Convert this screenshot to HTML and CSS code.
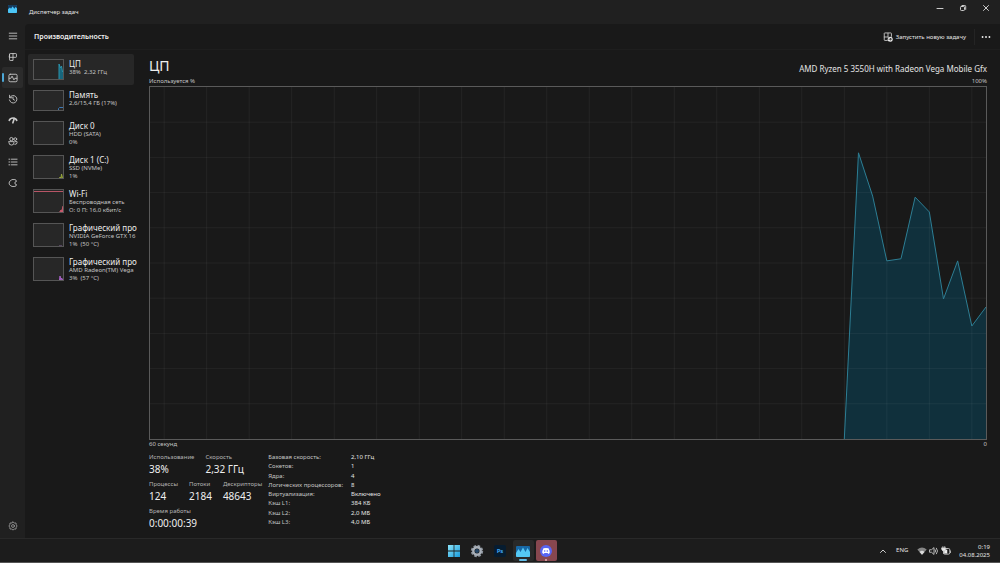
FILE: index.html
```html
<!DOCTYPE html>
<html lang="ru">
<head>
<meta charset="utf-8">
<meta name="viewport" content="width=device-width, initial-scale=1">
<title>Диспетчер задач</title>
<link rel="stylesheet" href="styles.css">
</head>
<body>
<div class="window">
  <header class="titlebar">
    <svg class="app-icon" viewBox="0 0 18 16"><rect width="18" height="16" rx="2" fill="#1673b8"/><path d="M0 2Q0 0 2 0H16Q18 0 18 2V6L15 4 13 7 9 3 6 7 4 5 0 8Z" fill="#173b5c"/><path d="M0 9 4 5 6 8 9 3 13 8 15 4 18 7V14Q18 16 16 16H2Q0 16 0 14Z" fill="#4cc5f5"/></svg>
    <span class="app-name">Диспетчер задач</span>
    <div class="controls">
      <button class="control" aria-label="Свернуть"><svg class="icon-s" viewBox="0 0 8 8"><path d="M1 4.500H7"/></svg></button>
      <button class="control" aria-label="Восстановить"><svg class="icon-s" viewBox="0 0 8 8"><rect x="1.500" y="2.500" width="4" height="4" rx=".8"/><path d="M3 1.500H5.800Q6.700 1.500 6.700 2.400V5.400"/></svg></button>
      <button class="control" aria-label="Закрыть"><svg class="icon-s" viewBox="0 0 8 8"><path d="M1.500 1.500 6.500 6.500M6.500 1.500 1.500 6.500"/></svg></button>
    </div>
  </header>
  <div class="body">
    <nav class="rail">
      <button class="rail-btn" aria-label="Меню"><svg class="icon" viewBox="0 0 16 16"><path d="M2 3.500H14M2 8H14M2 12.500H14"/></svg></button>
      <button class="rail-btn" aria-label="Процессы"><svg class="icon" viewBox="0 0 16 16"><path d="M2.500 3.500Q2.500 2.500 3.500 2.500H12.500Q13.500 2.500 13.500 3.500V7.500Q13.500 8.500 12.500 8.500H2.500ZM8 2.500V13.500H3.500Q2.500 13.500 2.500 12.500V3.500"/></svg></button>
      <button class="rail-btn current" aria-label="Производительность" aria-current="page"><svg class="icon" viewBox="0 0 16 16"><rect x="1.500" y="2" width="13" height="12" rx="2"/><path d="M2 8.500H4.500L6.500 5 9.500 11 11 8.500H14"/></svg></button>
      <button class="rail-btn" aria-label="Журнал приложений"><svg class="icon" viewBox="0 0 16 16"><path d="M2.500 2V6H6.500M2.800 5.800A6 6 0 1 1 2.300 9.500M8 5V8.500L10.500 9.800"/></svg></button>
      <button class="rail-btn" aria-label="Автозагрузка"><svg class="icon" viewBox="0 0 16 16"><path d="M2 8.500A6.500 6 0 0 1 14 8.500" stroke-width="2.600"/><path d="M10 5.500 7.800 12.500" stroke-width="2.600"/></svg></button>
      <button class="rail-btn" aria-label="Пользователи"><svg class="icon" viewBox="0 0 16 16"><circle cx="5.500" cy="5" r="2.700"/><circle cx="11.700" cy="5" r="2.200"/><path d="M1.500 9H9.500V11Q9.500 14.500 5.500 14.500T1.500 11ZM11 9H14.500V10.500Q14.500 13.500 11 13.500"/></svg></button>
      <button class="rail-btn" aria-label="Подробности"><svg class="icon" viewBox="0 0 16 16"><path d="M1.500 3.500H3M5.500 3.500H14.500M1.500 8H3M5.500 8H14.500M1.500 12.500H3M5.500 12.500H14.500"/></svg></button>
      <button class="rail-btn" aria-label="Службы"><svg class="icon" viewBox="0 0 16 16"><path d="M7 2.500H11Q13.500 3 13.500 5.500A2.500 2.500 0 0 0 13.500 10.500Q13.500 13 11 13.500H6.500L4.500 12.500A4.800 4.800 0 0 1 4.500 3.800Z"/></svg></button>
      <button class="rail-btn rail-end" aria-label="Параметры"><svg class="icon dim" viewBox="0 0 16 16"><path d="M8 1.500 10 3.200 12.800 3.200 13.200 6 14.500 8 13.200 10 12.800 12.800 10 12.900 8 14.500 6 12.900 3.200 12.800 2.800 10 1.500 8 2.800 6 3.200 3.200 6 3.200Z"/><circle cx="8" cy="8" r="2.300"/></svg></button>
    </nav>
    <div class="page">
      <div class="toolbar">
        <h1 class="page-title">Производительность</h1>
        <button class="run-task"><svg class="icon" viewBox="0 0 16 16"><path d="M7 13.500H3Q2 13.500 2 12.500V2Q2 1.500 3 1.500H12.500Q13.500 1.500 13.500 2.500V7M2 8H8M8 2V8"/><circle cx="11.500" cy="11.500" r="4" fill="#eee" stroke="none"/><path d="M9.500 11.500H13M11.500 9.800 13.200 11.500 11.500 13.200" stroke="#222"/></svg>Запустить новую задачу</button>
        <button class="more" aria-label="Ещё"><svg class="icon" viewBox="0 0 16 16"><g class="solid"><circle cx="2.500" cy="8" r="1.500"/><circle cx="8" cy="8" r="1.500"/><circle cx="13.500" cy="8" r="1.500"/></g></svg></button>
      </div>
      <div class="content">
        <div class="devices">
          <button class="device short selected"><svg class="thumb" viewBox="0 0 31 21"><path d="M26 21V5L27.500 9 28.500 7 29.500 13 31 11V21Z" fill="#17667d" stroke="#2b93ac"/></svg><span class="device-text"><b class="device-name">ЦП</b><span>38%&nbsp; 2,32 ГГц</span></span></button>
          <button class="device short"><svg class="thumb" viewBox="0 0 31 21"><path d="M25.500 20V18.500L26.500 17.500H31" fill="none" stroke="#3d79b5"/></svg><span class="device-text"><b class="device-name">Память</b><span>2,6/15,4 ГБ (17%)</span></span></button>
          <button class="device"><svg class="thumb" viewBox="0 0 31 24"></svg><span class="device-text"><b class="device-name">Диск 0</b><span>HDD (SATA)</span><span>0%</span></span></button>
          <button class="device"><svg class="thumb" viewBox="0 0 31 24"><path d="M26 24 27 22 28 23 28.500 19 29.500 23V24Z" fill="#6c7a2b" stroke="#96a53b"/></svg><span class="device-text"><b class="device-name">Диск 1 (C:)</b><span>SSD (NVMe)</span><span>1%</span></span></button>
          <button class="device"><svg class="thumb" viewBox="0 0 31 24"><path d="M1 2.500H30" stroke="#b85566"/><path d="M26 24 28 21 29 21.500 30 17 31 16V24Z" fill="#c95b6e" stroke="#c95b6e"/></svg><span class="device-text"><b class="device-name">Wi-Fi</b><span>Беспроводная сеть</span><span>О: 0 П: 16,0 кбит/с</span></span></button>
          <button class="device"><svg class="thumb" viewBox="0 0 31 24"><path d="M26 22.500H29" stroke="#55455f"/></svg><span class="device-text"><b class="device-name">Графический про</b><span>NVIDIA GeForce GTX 16</span><span>1%&nbsp; (50 °C)</span></span></button>
          <button class="device"><svg class="thumb" viewBox="0 0 31 24"><path d="M25 24 26.500 23 27 19 28 23 28.500 21 30 23V24Z" fill="#7c4a97" stroke="#a561c4"/></svg><span class="device-text"><b class="device-name">Графический про</b><span>AMD Radeon(TM) Vega</span><span>3%&nbsp; (57 °C)</span></span></button>
        </div>
        <main class="detail">
          <div class="detail-head"><h2 class="detail-title">ЦП</h2><span class="cpu-name">AMD Ryzen 5 3550H with Radeon Vega Mobile Gfx</span></div>
          <div class="caption"><span>Используется %</span><span>100%</span></div>
          <svg class="chart" viewBox="0 0 59 100" preserveAspectRatio="none" role="img" aria-label="Загрузка ЦП">
            <path class="area" d="M49 100 50 18.700 51 31 52 49.400 53 48.800 54 31.300 55 35.500 56 60.200 57 49.400 58 67.900 59 62.500V100Z"/>
            <path class="grid" d="M1 0V100M4 0V100M7 0V100M10 0V100M13 0V100M16 0V100M19 0V100M22 0V100M25 0V100M28 0V100M31 0V100M34 0V100M37 0V100M40 0V100M43 0V100M46 0V100M49 0V100M52 0V100M55 0V100M58 0V100M0 10H59M0 20H59M0 30H59M0 40H59M0 50H59M0 60H59M0 70H59M0 80H59M0 90H59"/>
            <path class="line" d="M49 100 50 18.700 51 31 52 49.400 53 48.800 54 31.300 55 35.500 56 60.200 57 49.400 58 67.900 59 62.500"/>
          </svg>
          <div class="caption"><span>60 секунд</span><span>0</span></div>
          <div class="stats">
            <div class="live">
              <div class="row"><div><div class="label">Использование</div><div class="value">38%</div></div><div><div class="label">Скорость</div><div class="value">2,32 ГГц</div></div></div>
              <div class="row"><div><div class="label">Процессы</div><div class="value">124</div></div><div><div class="label">Потоки</div><div class="value">2184</div></div><div><div class="label">Дескрипторы</div><div class="value">48643</div></div></div>
              <div><div class="label">Время работы</div><div class="value">0:00:00:39</div></div>
            </div>
            <dl class="specs">
              <dt>Базовая скорость:</dt><dd>2,10 ГГц</dd>
              <dt>Сокетов:</dt><dd>1</dd>
              <dt>Ядра:</dt><dd>4</dd>
              <dt>Логических процессоров:</dt><dd>8</dd>
              <dt>Виртуализация:</dt><dd>Включено</dd>
              <dt>Кэш L1:</dt><dd>384 КБ</dd>
              <dt>Кэш L2:</dt><dd>2,0 МБ</dd>
              <dt>Кэш L3:</dt><dd>4,0 МБ</dd>
            </dl>
          </div>
        </main>
      </div>
    </div>
  </div>
</div>
<footer class="taskbar">
  <div class="apps">
    <button class="app" aria-label="Пуск"><svg class="app-pic" viewBox="0 0 14 14"><defs><linearGradient id="win" x2="1" y2="1"><stop stop-color="#8be4fa"/><stop offset="1" stop-color="#199bdc"/></linearGradient></defs><path d="M1 1H6.600V6.600H1ZM7.400 1H13V6.600H7.400ZM1 7.400H6.600V13H1ZM7.400 7.400H13V13H7.400Z" fill="url(#win)"/></svg></button>
    <button class="app" aria-label="Параметры"><svg class="app-pic" viewBox="0 0 14 14"><circle cx="7" cy="7" r="5.200" fill="none" stroke="#8b929b" stroke-width="2" stroke-dasharray="2.600 1.483"/><circle cx="7" cy="7" r="3.700" fill="none" stroke="#a9b0b9" stroke-width="2.400"/><circle cx="7" cy="7" r="2" fill="#254768"/></svg></button>
    <button class="app ps" aria-label="Photoshop"><span class="ps-tile">Ps</span></button>
    <button class="app active" aria-label="Диспетчер задач"><svg class="app-pic" viewBox="0 0 14 14"><rect x="0" y="2" width="14" height="11" rx="1" fill="#1767a5"/><path d="M0 9 2.500 5 4.500 8 7 3.500 9.500 8 11.500 4 14 8V12Q14 13 13 13H1Q0 13 0 12Z" fill="#54c8f4"/></svg></button>
    <button class="app alert" aria-label="Discord"><svg class="app-pic" viewBox="0 0 14 14"><circle cx="7" cy="7" r="6" fill="#5865f2"/><path d="M4.500 4.300Q7 3.500 9.500 4.300 10.800 6.500 10.700 9L9.200 9.900 8.600 9H5.400L4.800 9.900 3.300 9Q3.200 6.500 4.500 4.300Z" fill="#fff"/><circle cx="5.700" cy="7" r=".8" fill="#5865f2"/><circle cx="8.300" cy="7" r=".8" fill="#5865f2"/></svg></button>
  </div>
  <div class="tray">
    <button class="tray-btn" aria-label="Скрытые значки"><svg class="icon-s" viewBox="0 0 8 8"><path d="M1.500 5.500 4 3 6.500 5.500"/></svg></button>
    <button class="tray-btn lang">ENG</button>
    <button class="tray-btn status" aria-label="Сеть, звук, батарея">
      <svg class="icon" viewBox="0 0 16 16"><path d="M8 14 .5 5.500Q8-1 15.500 5.500Z" fill="#858585" stroke="none"/><path d="M8 14 4 9.500Q8 6 12 9.500Z" fill="#ddd" stroke="none"/></svg>
      <svg class="icon" viewBox="0 0 16 16"><path d="M1.500 6H4L8 2.500V13.500L4 10H1.500ZM10 6Q11.500 8 10 10M12 3.500Q15.500 8 12 12.500"/></svg>
      <svg class="icon" viewBox="0 0 16 16"><rect x="4" y="4" width="10" height="9" rx="2"/><path d="M5 6H10V12H5ZM14.500 7H15.500V11H14.500Z" class="solid"/><path d="M3 1V3M6 1V3M1.500 3H7.500V6L6 8H3L1.500 6ZM4.500 8V12" fill="#eee"/></svg>
    </button>
    <div class="clock"><time>0:19</time><time>04.08.2025</time></div>
  </div>
</footer>
</body>
</html>
```
FILE: styles.css
```css
* { box-sizing: border-box; }
body {
  margin: 0;
  min-height: 100vh;
  display: flex;
  flex-direction: column;
  background: #202020;
  color: #e4e4e4;
  font: 6px/9px "Noto Sans", "Open Sans", sans-serif;
}
button { margin: 0; padding: 0; border: 0; background: none; color: inherit; font: inherit; text-align: left; }
svg { display: block; flex: none; }
h1, h2, dl, dd { margin: 0; }

.icon, .icon-s { width: 10px; height: 10px; fill: none; stroke: #ccc; stroke-width: 1.4; stroke-linecap: round; stroke-linejoin: round; }
.icon-s { width: 8px; height: 8px; stroke-width: 1; }
.dim { stroke: #999; }
.solid { fill: #eee; stroke: none; }

.window { flex: 1; display: flex; flex-direction: column; }
.titlebar { display: flex; align-items: center; height: 24px; padding-left: 8px; }
.app-icon { width: 9px; height: 8px; margin-bottom: 6px; }
.app-name { margin-left: 12px; }
.controls { display: flex; margin: 0 3px 8px auto; }
.control { width: 23px; height: 16px; display: grid; place-items: center; }

.body { flex: 1; display: flex; }
.rail { width: 25px; display: flex; flex-direction: column; padding: 1px 2px 2px; }
.rail-btn { height: 21px; display: grid; place-items: center; border-radius: 2px; position: relative; }
.rail-btn.current { background: #2b2b2b; }
.rail-btn.current::before { content: ""; position: absolute; left: 0; top: 6px; width: 2px; height: 9px; border-radius: 1px; background: #4ca8d8; }
.rail-end { margin-top: auto; }

.page { flex: 1; min-width: 0; display: flex; flex-direction: column; background: #191919; border-top-left-radius: 4px; }
.toolbar { display: flex; align-items: center; height: 26px; padding: 0 9px; border-bottom: 1px solid #1e1e1e; }
.page-title { font-size: 7px; font-weight: 600; color: #f0f0f0; }
.run-task { display: flex; align-items: center; gap: 3px; margin-left: auto; padding-right: 8px; line-height: 16px; border-right: 1px solid #242424; }
.more { margin-left: 6px; padding: 4px 0; }

.content { flex: 1; display: flex; padding: 4px 13px 8px 3px; }
.devices { width: 108px; flex: none; display: flex; flex-direction: column; }
.device { display: flex; align-items: flex-start; gap: 5px; min-height: 34px; padding: 5px 0 0 5px; border-radius: 2px; line-height: 8px; color: #c4c4c4; }
.device.short { min-height: 31px; }
.device.selected { background: #272727; margin-right: 2px; }
.thumb { width: 31px; height: 24px; background: #272727; outline: 1px solid #555; outline-offset: -1px; stroke-width: 1; }
.short .thumb { height: 21px; }
.device-text { white-space: nowrap; display: flex; flex-direction: column; }
.device-name { font-size: 8px; font-weight: 400; line-height: 9px; color: #eee; }

.detail { flex: 1; min-width: 0; margin-left: 13px; display: flex; flex-direction: column; }
.detail-head { display: flex; align-items: center; justify-content: space-between; height: 23px; }
.detail-title { font-size: 14px; line-height: 20px; font-weight: 400; color: #eee; }
.cpu-name { font-size: 8px; line-height: 12px; padding-top: 6px; }
.caption { display: flex; justify-content: space-between; color: #c4c4c4; }
.chart { flex: 1 1 0; width: 100%; min-height: 100px; border: 1px solid #5a5a5a; }
.chart path { vector-effect: non-scaling-stroke; }
.area { fill: #10303c; }
.grid { fill: none; stroke: #fff; stroke-opacity: .05; }
.line { fill: none; stroke: #2d7e94; }

.stats { display: flex; gap: 6px; padding-top: 3px; }
.live { display: flex; flex-direction: column; gap: 3px; }
.row { display: flex; gap: 11px; }
.label { line-height: 10px; color: #b4b4b4; }
.value { font-size: 10px; line-height: 14px; color: #eee; }
.specs { display: grid; grid-template-columns: auto auto; column-gap: 8px; align-content: space-between; padding: 1px 0 3px; color: #c4c4c4; }
.specs dd { color: #e4e4e4; }

.taskbar { display: grid; grid-template-columns: 1fr auto 1fr; align-items: center; height: 25px; background: #1c1c1c; border-top: 1px solid #292929; border-bottom: 1px solid #555; }
.apps { grid-column: 2; display: flex; gap: 2px; }
.app { width: 21px; height: 21px; display: grid; place-items: center; border-radius: 2px; position: relative; }
.app-pic { width: 14px; height: 14px; }
.ps-tile { width: 12px; height: 12px; border-radius: 2px; background: #061c30; color: #3fa4f0; font-weight: 700; line-height: 12px; text-align: center; }
.active { background: #292929; }
.alert { background: #87474f; }
.active::after, .alert::after { content: ""; position: absolute; bottom: 0; left: 50%; width: 8px; height: 2px; margin-left: -4px; border-radius: 1px; background: #62bde8; }
.alert::after { width: 2px; margin-left: -1px; background: #e5b2b2; }
.tray { display: flex; align-items: center; justify-content: flex-end; gap: 8px; padding-right: 10px; }
.lang { padding: 0 1px; }
.status { display: flex; gap: 2px; }
.clock { display: flex; flex-direction: column; text-align: right; line-height: 8px; }
```
